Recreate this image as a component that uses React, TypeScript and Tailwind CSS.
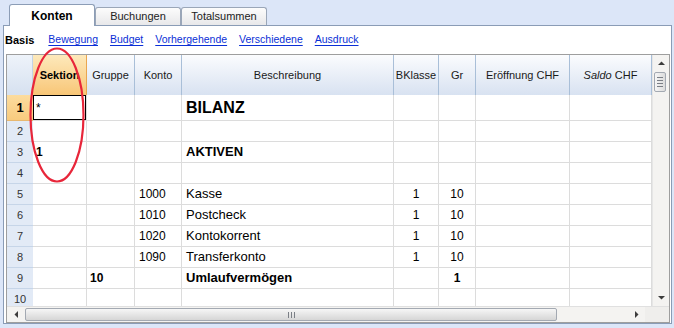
import type { ReactNode } from "react";

type Row = {
  n: number;
  sektion?: string;
  gruppe?: string;
  konto?: string;
  text?: string;
  bk?: string;
  gr?: string;
  kind?: "title" | "bold";
};

const ROWS: Row[] = [
  { n: 1, sektion: "*", text: "BILANZ", kind: "title" },
  { n: 2 },
  { n: 3, sektion: "1", text: "AKTIVEN", kind: "bold" },
  { n: 4 },
  { n: 5, konto: "1000", text: "Kasse", bk: "1", gr: "10" },
  { n: 6, konto: "1010", text: "Postcheck", bk: "1", gr: "10" },
  { n: 7, konto: "1020", text: "Kontokorrent", bk: "1", gr: "10" },
  { n: 8, konto: "1090", text: "Transferkonto", bk: "1", gr: "10" },
  { n: 9, gruppe: "10", text: "Umlaufvermögen", gr: "1", kind: "bold" },
  { n: 10 },
];

const LINKS = ["Bewegung", "Budget", "Vorhergehende", "Verschiedene", "Ausdruck"];

function HeadCell({ w, children }: { w: string; children: ReactNode }) {
  return (
    <div
      className={`${w} flex h-full shrink-0 items-center justify-center border-r border-[#a9bfd8] bg-linear-to-b from-[#fbfcfe] to-[#d8e2f1] text-[11px] text-[#1a1a1a]`}
    >
      {children}
    </div>
  );
}

function Cell({ w, children, extra = "" }: { w: string; children?: ReactNode; extra?: string }) {
  return (
    <div className={`${w} flex h-full shrink-0 items-center border-r border-b border-[#dcdcdc] ${extra}`}>
      {children}
    </div>
  );
}

function Arrow({ dir }: { dir: "up" | "down" | "left" | "right" }) {
  const d = {
    up: "M3.5 0.5L7 4H0z",
    down: "M0 0H7L3.5 3.5z",
    left: "M4 0V7L0.5 3.5z",
    right: "M0 0V7L3.5 3.5z",
  }[dir];
  const vertical = dir === "up" || dir === "down";
  return (
    <svg width={vertical ? 7 : 4} height={vertical ? 4 : 7} viewBox={vertical ? "0 0 7 4" : "0 0 4 7"}>
      <path d={d} fill="#3c3c3c" />
    </svg>
  );
}

export default function App() {
  return (
    <div className="relative h-[328px] w-[674px] overflow-hidden bg-[#dce6f8] font-['Liberation_Sans',Arial,sans-serif] text-black">
      {/* tabs */}
      <div className="flex h-[25px] items-end pl-[9px]">
        <div className="relative z-10 -mb-px flex h-[22px] w-[86px] items-center justify-center rounded-t-[3px] border border-b-0 border-[#8c9db6] bg-white text-[12px] font-bold">
          Konten
        </div>
        <div className="flex h-[18px] w-[86px] items-center justify-center rounded-t-[3px] border border-b-0 border-[#9aa6b8] bg-linear-to-b from-[#fcfcfc] to-[#e8e8ea] text-[11px] text-[#222]">
          Buchungen
        </div>
        <div className="flex h-[18px] w-[86px] items-center justify-center rounded-t-[3px] border border-b-0 border-[#9aa6b8] bg-linear-to-b from-[#fcfcfc] to-[#e8e8ea] text-[11px] text-[#222]">
          Totalsummen
        </div>
      </div>

      {/* panel */}
      <div className="ml-[3px] h-[299px] w-[669px] border border-[#8a9cb6] bg-white">
        <div className="flex h-[28px] items-center gap-[12px] pl-[1px] text-[10.5px]">
          <span className="mr-[2px] text-[11px] font-bold">Basis</span>
          {LINKS.map((l) => (
            <a key={l} href="#" className="text-[#0a2fd6] underline underline-offset-2">
              {l}
            </a>
          ))}
        </div>

        {/* grid */}
        <div className="ml-[2px] flex h-[269px] w-[664px] flex-col border border-[#9e9e9e]">
          <div className="flex h-[251px]">
            <div className="flex w-[645px] flex-col">
              <div className="flex h-[40px]">
                <div className="h-full w-[26px] shrink-0 border-r border-[#c3d3e6] bg-linear-to-b from-[#eef3fa] to-[#d6e1f0]" />
                <div className="flex h-full w-[54px] shrink-0 items-center justify-center border-r border-[#e9a650] bg-linear-to-b from-[#fde9bb] to-[#f8c676] text-[11px] font-bold">
                  Sektion
                </div>
                <HeadCell w="w-[48px]">Gruppe</HeadCell>
                <HeadCell w="w-[47px]">Konto</HeadCell>
                <HeadCell w="w-[212px]">Beschreibung</HeadCell>
                <HeadCell w="w-[45px]">BKlasse</HeadCell>
                <HeadCell w="w-[37px]">Gr</HeadCell>
                <HeadCell w="w-[94px]">Eröffnung CHF</HeadCell>
                <HeadCell w="w-[82px]">
                  <span className="italic">Saldo</span>&nbsp;CHF
                </HeadCell>
              </div>

              <div className="flex-1 overflow-hidden">
                {ROWS.map((r) => {
                  const first = r.n === 1;
                  const textCls =
                    r.kind === "title"
                      ? "text-[16px] font-bold"
                      : r.kind === "bold"
                        ? "text-[13px] font-bold"
                        : "text-[13px]";
                  return (
                    <div key={r.n} className={`flex ${first ? "h-[26px]" : "h-[21px]"}`}>
                      <div
                        className={`flex h-full w-[26px] shrink-0 items-center justify-center border-b ${
                          first
                            ? "border-[#e8b870] bg-linear-to-b from-[#fcdc9e] to-[#f9cb7e] text-[13px] font-bold"
                            : "border-[#c6d5e8] bg-[#e2eaf6] text-[11px] text-[#333]"
                        }`}
                      >
                        {r.n}
                      </div>
                      <Cell
                        w="w-[54px]"
                        extra={`pl-[3px] text-[12px] ${
                          first ? "shadow-[inset_0_0_0_1px_#000] font-normal" : "font-bold"
                        }`}
                      >
                        {r.sektion}
                      </Cell>
                      <Cell w="w-[48px]" extra="pl-[3px] text-[12px] font-bold">
                        {r.gruppe}
                      </Cell>
                      <Cell w="w-[47px]" extra="pl-[4px] text-[12px]">
                        {r.konto}
                      </Cell>
                      <Cell w="w-[212px]" extra={`pl-[4px] ${textCls}`}>
                        {r.text}
                      </Cell>
                      <Cell w="w-[45px]" extra="justify-center text-[12px]">
                        {r.bk}
                      </Cell>
                      <Cell
                        w="w-[37px]"
                        extra={`justify-center text-[12px] ${r.kind === "bold" ? "font-bold" : ""}`}
                      >
                        {r.gr}
                      </Cell>
                      <Cell w="w-[94px]" />
                      <Cell w="w-[82px]" />
                    </div>
                  );
                })}
              </div>
            </div>

            {/* vertical scrollbar */}
            <div className="flex w-[17px] flex-col border-l border-[#e6e6e6] bg-[#f4f3f1]">
              <div className="flex h-[16px] items-center justify-center">
                <Arrow dir="up" />
              </div>
              <div className="mt-px ml-px flex h-[20px] w-[12px] flex-col items-center justify-center gap-[2px] rounded-[2px] border border-[#a3a9b2] bg-linear-to-r from-[#f6f6f6] to-[#dcdcdc]">
                <div className="h-px w-[6px] bg-[#7b7f86]" />
                <div className="h-px w-[6px] bg-[#7b7f86]" />
                <div className="h-px w-[6px] bg-[#7b7f86]" />
                <div className="h-px w-[6px] bg-[#7b7f86]" />
              </div>
              <div className="flex-1" />
              <div className="flex h-[16px] items-center justify-center">
                <Arrow dir="down" />
              </div>
            </div>
          </div>

          {/* horizontal scrollbar */}
          <div className="flex h-[16px] border-t border-[#e0e0e0]">
            <div className="flex w-[638px] items-center bg-[#f4f3f1]">
              <div className="flex w-[17px] items-center justify-center">
                <Arrow dir="left" />
              </div>
              <div className="ml-px flex h-[13px] w-[532px] items-center justify-center gap-[2px] rounded-[2px] border border-[#a3a9b2] bg-linear-to-b from-[#f6f6f6] to-[#d6d6d6]">
                <div className="h-[6px] w-px bg-[#7b7f86]" />
                <div className="h-[6px] w-px bg-[#7b7f86]" />
                <div className="h-[6px] w-px bg-[#7b7f86]" />
              </div>
              <div className="flex-1" />
              <div className="flex w-[16px] items-center justify-center">
                <Arrow dir="right" />
              </div>
            </div>
            <div className="flex-1 bg-[#efeeec]" />
          </div>
        </div>
      </div>

      {/* red annotation ellipse */}
      <svg className="pointer-events-none absolute top-[46px] left-[28px]" width="58" height="138" viewBox="0 0 58 138">
        <ellipse cx="29" cy="69" rx="26.5" ry="66.5" fill="none" stroke="#e8263a" strokeWidth="2.2" />
      </svg>
    </div>
  );
}
